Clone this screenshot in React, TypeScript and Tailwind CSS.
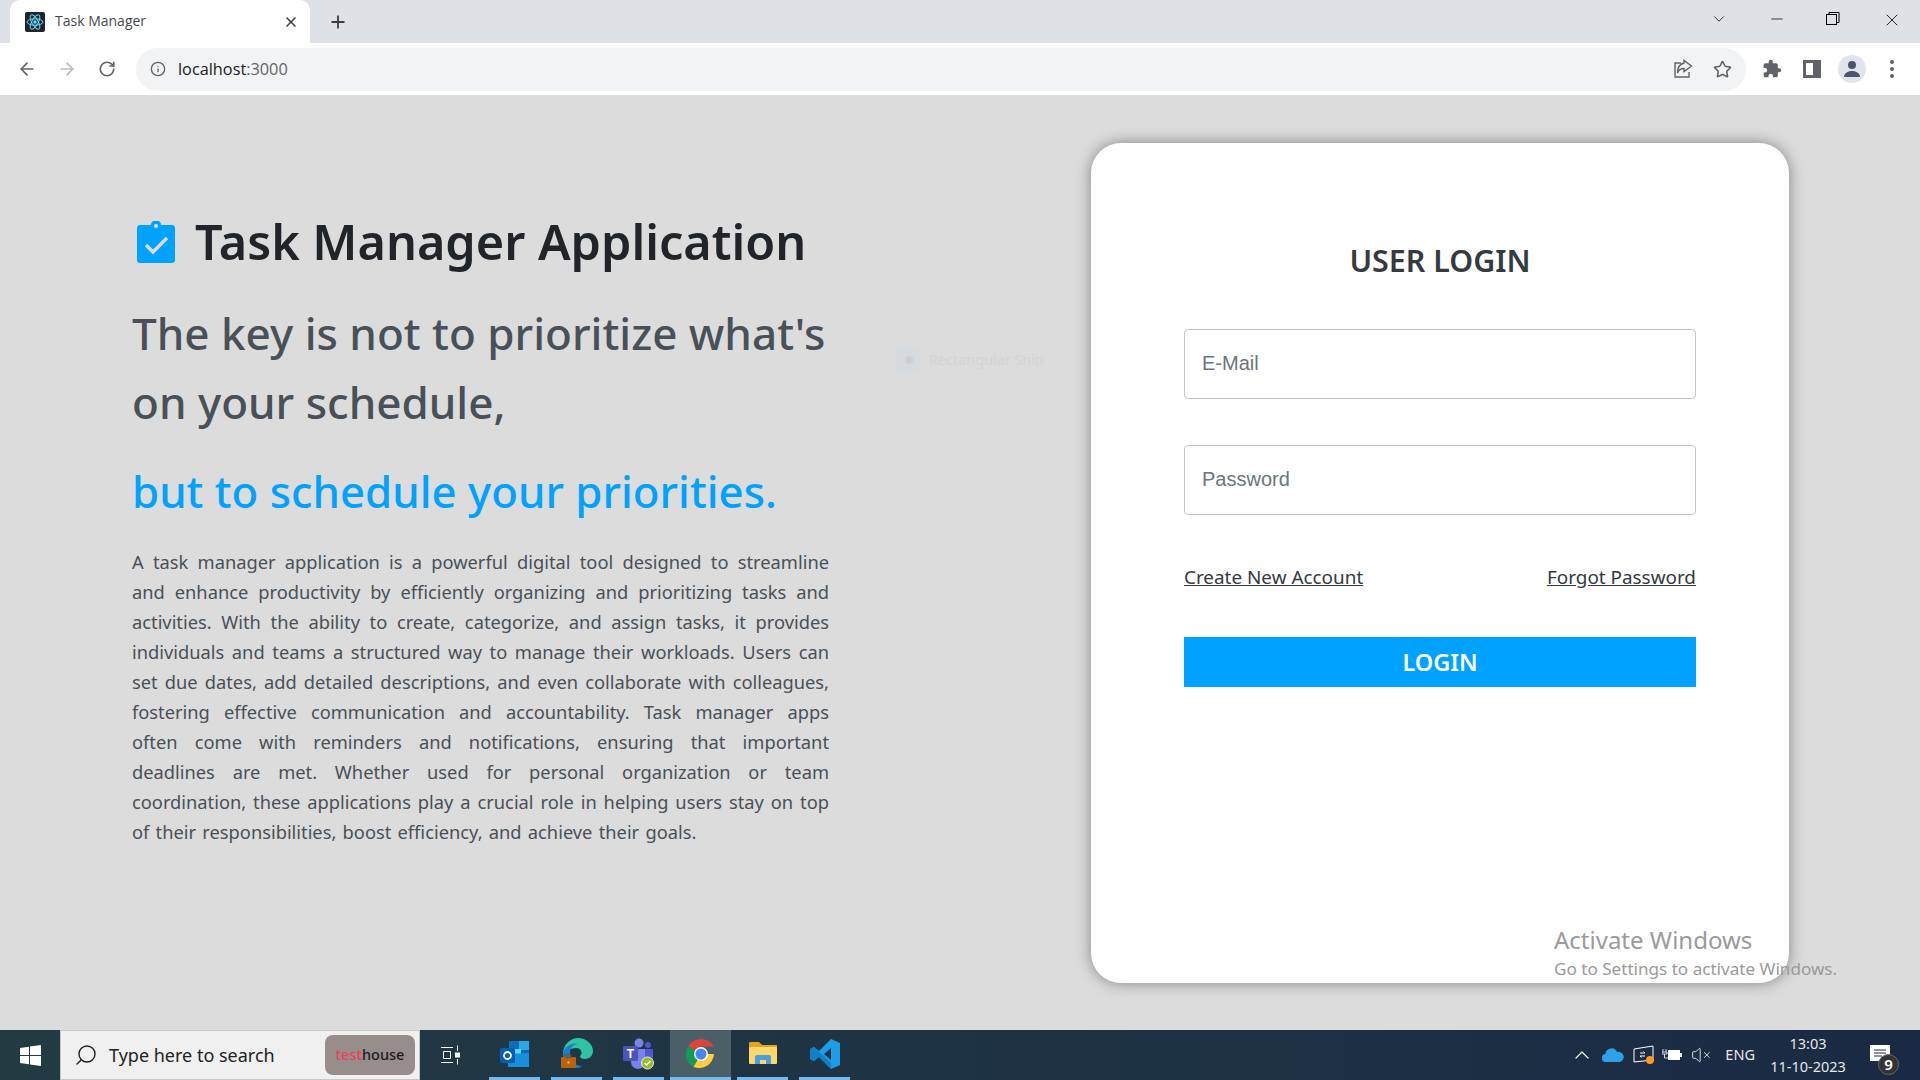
import { ArrowLeft, ArrowRight, ChevronDown, ChevronUp, Info, Minus, Plus, RotateCw, Search, Star, VolumeX, X } from 'lucide-react';

const font = { fontFamily: '"Noto Sans", "Open Sans", sans-serif' };

const paragraphLines = [
  'A task manager application is a powerful digital tool designed to streamline',
  'and enhance productivity by efficiently organizing and prioritizing tasks and',
  'activities. With the ability to create, categorize, and assign tasks, it provides',
  'individuals and teams a structured way to manage their workloads. Users can',
  'set due dates, add detailed descriptions, and even collaborate with colleagues,',
  'fostering effective communication and accountability. Task manager apps',
  'often come with reminders and notifications, ensuring that important',
  'deadlines are met. Whether used for personal organization or team',
  'coordination, these applications play a crucial role in helping users stay on top',
];

function ReactIcon() {
  return (
    <svg width="20" height="20" viewBox="0 0 20 20" className="shrink-0">
      <rect width="20" height="20" rx="2" fill="#20232a" />
      <circle cx="10" cy="10" r="1.8" fill="#61dafb" />
      <g fill="none" stroke="#61dafb" strokeWidth="1">
        <ellipse cx="10" cy="10" rx="8" ry="3.2" />
        <ellipse cx="10" cy="10" rx="8" ry="3.2" transform="rotate(60 10 10)" />
        <ellipse cx="10" cy="10" rx="8" ry="3.2" transform="rotate(120 10 10)" />
      </g>
    </svg>
  );
}

function TabBar() {
  return (
    <div className="flex h-[43px] items-end bg-[#dee1e6] pl-[10px]">
      <div className="flex h-[43px] w-[300px] items-center rounded-t-[10px] bg-white pl-[15px] pr-[11px]">
        <ReactIcon />
        <span className="ml-[10px] flex-1 pb-[2px] text-[14px] text-[#45494e]" style={{ fontFamily: '"Open Sans", sans-serif' }}>Task Manager</span>
        <X size={16} strokeWidth={2.4} color="#3c4043" />
      </div>
      <div className="ml-[18px] flex h-[43px] items-center">
        <Plus size={20} strokeWidth={2.2} color="#3c4043" />
      </div>
      <div className="ml-auto flex h-[43px] items-start pt-[10px] text-black">
        <ChevronDown size={18} strokeWidth={1} className="mr-[40px]" />
        <Minus size={18} strokeWidth={1} className="mr-[40px]" />
        <svg width="14" height="14" viewBox="0 0 14 14" fill="none" stroke="black" className="mr-[42px] mt-[2px]">
          <rect x="0.5" y="2.5" width="10" height="10" />
          <path d="M3 2.5V0.5H13V10.5H10.5" />
        </svg>
        <X size={20} strokeWidth={1} className="mr-[18px]" />
      </div>
    </div>
  );
}

function Toolbar() {
  return (
    <div className="flex h-[52px] items-center bg-white shadow-[0_1px_0_#e4e4e4]">
      <div className="ml-[17px] flex w-[119px] items-center">
        <ArrowLeft size={20} color="#5f6368" className="mr-[20px]" />
        <ArrowRight size={20} color="#b9bbbe" className="mr-[21px]" />
        <RotateCw size={18} color="#5f6368" strokeWidth={2.2} />
      </div>
      <div className="flex h-[43px] w-[1610px] items-center rounded-full bg-[#f1f3f4] pl-[14px] pr-[14px]">
        <Info size={16} color="#5f6368" />
        <span className="ml-[12px] flex-1 text-[16.300px] text-[#202124]" style={{ fontFamily: '"Open Sans", sans-serif' }}>
          localhost<span className="text-[#5f6368]">:3000</span>
        </span>
        <svg width="20" height="20" viewBox="0 0 20 20" fill="none" stroke="#5f6368" strokeWidth="1.4" className="mr-[20px]">
          <path d="M8 4H2V18H16V13" />
          <path d="M11 4V1.5L18.5 7L11 12.5V9.5C7.5 9.5 5.5 11 4.5 14C4.5 8.5 7 5 11 4Z" />
        </svg>
        <Star size={19} color="#5f6368" strokeWidth={2} />
      </div>
      <div className="ml-[16px] flex items-center text-[#5f6368]">
        <svg width="20" height="20" viewBox="0 0 24 24" fill="#5f6368">
          <path d="M20.5 11H19V7a2 2 0 0 0-2-2h-4V3.5a2.5 2.5 0 0 0-5 0V5H4a2 2 0 0 0-2 2v3.800h1.500a2.700 2.700 0 0 1 0 5.400H2V20a2 2 0 0 0 2 2h3.800v-1.500a2.700 2.700 0 0 1 5.400 0V22H17a2 2 0 0 0 2-2v-4h1.500a2.500 2.500 0 0 0 0-5z" />
        </svg>
        <div className="ml-[21px] h-[18px] w-[18px] border-[3px] border-r-[8px] border-[#5f6368] bg-white" />
        <div className="ml-[17px] flex h-[28px] w-[28px] items-center justify-center rounded-full bg-[#e1e4ea]">
          <svg width="18" height="18" viewBox="0 0 18 18" fill="#48566f">
            <circle cx="9" cy="5" r="4" />
            <path d="M1 17c0-3.500 3.500-6 8-6s8 2.500 8 6z" />
          </svg>
        </div>
        <div className="ml-[24px] flex flex-col gap-[3px]">
          <div className="h-[4px] w-[4px] rounded-full bg-[#5f6368]" />
          <div className="h-[4px] w-[4px] rounded-full bg-[#5f6368]" />
          <div className="h-[4px] w-[4px] rounded-full bg-[#5f6368]" />
        </div>
      </div>
    </div>
  );
}

function ClipboardIcon() {
  return (
    <svg width="38" height="42" viewBox="0 0 38 42" className="shrink-0">
      <path d="M3 4h11a5 5 0 0 1 10 0h11a3 3 0 0 1 3 3v32a3 3 0 0 1-3 3H3a3 3 0 0 1-3-3V7a3 3 0 0 1 3-3z" fill="#00a2ff" />
      <circle cx="19" cy="5" r="2" fill="#dcdcdc" />
      <path d="M9 24l7 7L30 17" fill="none" stroke="#dcdcdc" strokeWidth="3.500" />
    </svg>
  );
}

function LeftColumn() {
  return (
    <div className="w-[697px] pt-[116px]" style={font}>
      <div className="flex h-[62px] items-center">
        <div className="ml-[5px]"><ClipboardIcon /></div>
        <h1 className="ml-[20px] whitespace-nowrap pb-[2px] text-[48.600px] font-semibold leading-[60px] text-[#212529]">Task Manager Application</h1>
      </div>
      <h2 className="mt-[26px] whitespace-nowrap text-[44px] font-medium leading-[68.800px] text-[#495057]">
        The key is not to prioritize what's
        <br />
        on your schedule,
      </h2>
      <h2 className="mt-[20px] whitespace-nowrap text-[43.800px] font-medium leading-[68.800px] text-[#00a2ff]">but to schedule your priorities.</h2>
      <div className="mt-[22px] text-[18.300px] leading-[30px] text-[#495057]">
        {paragraphLines.map((line) => (
          <div key={line} className="text-justify [text-align-last:justify]">{line}</div>
        ))}
        <div className="[word-spacing:1.500px]">of their responsibilities, boost efficiency, and achieve their goals.</div>
      </div>
    </div>
  );
}

function LoginCard() {
  return (
    <div className="flex h-[840px] w-[698px] flex-col rounded-[30px] bg-white px-[93px] pt-[94px] shadow-[0_0_15px_rgba(0,0,0,0.4)]" style={font}>
      <h2 className="text-center text-[30.400px] font-semibold leading-[48px] text-[#343a40]">USER LOGIN</h2>
      <input placeholder="E-Mail" className="mt-[44px] h-[70px] rounded-[4px] border border-[#c4c4c4] px-[17px] pb-[2px] text-[20px] outline-none placeholder:text-[#6c757d]" style={{ fontFamily: '"Liberation Sans", sans-serif' }} />
      <input placeholder="Password" className="mt-[46px] h-[70px] rounded-[4px] border border-[#c4c4c4] px-[17px] pb-[2px] text-[20px] outline-none placeholder:text-[#6c757d]" style={{ fontFamily: '"Liberation Sans", sans-serif' }} />
      <div className="mt-[47px] flex justify-between text-[18.900px] leading-[30px] text-[#343a40] underline">
        <span>Create New Account</span>
        <span>Forgot Password</span>
      </div>
      <button className="mt-[45px] h-[50px] bg-[#00a2ff] pt-[1px] text-[23.500px] font-semibold text-white">LOGIN</button>
    </div>
  );
}

function OutlookIcon() {
  return (
    <svg width="30" height="28" viewBox="0 0 30 28">
      <rect x="9" y="1" width="20" height="26" rx="1" fill="#0f6cbd" />
      <rect x="19" y="1" width="10" height="9" fill="#28a8ea" />
      <rect x="14" y="9" width="7" height="8" fill="#50d9ff" />
      <path d="M7 14l22-1v14H9a1 1 0 0 1-1-1z" fill="#1490df" />
      <rect x="0" y="8" width="15" height="15" rx="1.500" fill="#0a5cb3" />
      <circle cx="7.500" cy="15.500" r="3.500" fill="none" stroke="white" strokeWidth="1.800" />
    </svg>
  );
}

function EdgeIcon() {
  return (
    <svg width="32" height="32" viewBox="0 0 32 32">
      <path d="M2 16C2 6 10 0 17 0c8 0 15 6 15 13 0 5-4 8-8 8-3 0-5-1-5-3 3-2 2-8-4-8C9 10 4 14 2 16z" fill="#2fc3a5" />
      <path d="M2 16C3 8 12 4 17 6c-5 0-8 4-8 10 0 6 5 12 12 12-2 2-4 2-6 2C8 30 2 24 2 16z" fill="#1a7fc9" />
      <rect x="0" y="19" width="15" height="11" rx="1" fill="#b8640f" />
      <rect x="5" y="16.500" width="5" height="3" fill="none" stroke="#8a4a0a" />
      <rect x="6.500" y="23.500" width="2" height="2" fill="#f5c04d" />
    </svg>
  );
}

function TeamsIcon() {
  return (
    <svg width="32" height="32" viewBox="0 0 32 32">
      <circle cx="16" cy="5" r="4.500" fill="#7b83eb" />
      <circle cx="25" cy="7" r="3" fill="#5059c9" />
      <path d="M18 11h11a1 1 0 0 1 1 1v8a5 5 0 0 1-5 5h-7z" fill="#5059c9" />
      <path d="M8 11h14v13a5 5 0 0 1-14 0z" fill="#7b83eb" />
      <rect x="0" y="8" width="15" height="15" rx="1.500" fill="#4b53bc" />
      <text x="7.500" y="20" textAnchor="middle" fontSize="12" fontWeight="700" fill="white" fontFamily="Liberation Sans, sans-serif">T</text>
      <circle cx="24.500" cy="25" r="6" fill="#92c01f" stroke="#e8e8e8" />
      <path d="M21.500 25l2 2 4-4" fill="none" stroke="white" strokeWidth="1.500" />
    </svg>
  );
}

function ChromeIcon() {
  return (
    <svg width="30" height="30" viewBox="0 0 30 30">
      <path d="M15 15L2.010 7.500A15 15 0 0 1 27.990 7.500H15z" fill="#db4437" />
      <path d="M15 15l-7.500 13A15 15 0 0 1 2.010 7.500z" fill="#0f9d58" />
      <path d="M15 15h12.990A15 15 0 0 1 7.500 27.990z" fill="#ffcd40" />
      <circle cx="15" cy="15" r="7" fill="white" />
      <circle cx="15" cy="15" r="5.500" fill="#4285f4" />
    </svg>
  );
}

function ExplorerIcon() {
  return (
    <svg width="28" height="24" viewBox="0 0 28 24">
      <path d="M0 1a1 1 0 0 1 1-1h9l3 3h-13z" fill="#e0a526" />
      <rect x="0" y="3" width="28" height="4" fill="#e0a526" />
      <rect x="0" y="5" width="28" height="17" rx="1" fill="#ffd869" />
      <path d="M6 22V15a2 2 0 0 1 2-2h12a2 2 0 0 1 2 2v7h-5v-4h-6v4z" fill="#4a9fe0" />
    </svg>
  );
}

function VscodeIcon() {
  return (
    <svg width="30" height="30" viewBox="0 0 30 30">
      <path d="M21 0l9 4v22l-9 4-12-12-5 4-4-2v-10l4-2 5 4zM21 9l-7 6 7 6z" fill="#1f9ce8" fillRule="evenodd" />
      <path d="M0 10l4-2 17 16v6L9 18l-5 4-4-2z" fill="#0a75b8" opacity="0.7" />
    </svg>
  );
}

function TaskItem({ active, children }: { active?: boolean; children: React.ReactNode }) {
  return (
    <div className={`flex h-[50px] flex-col ${active ? 'w-[61px] bg-[#4b5f68]' : 'w-[51px]'}`}>
      <div className="flex flex-1 items-center justify-center">{children}</div>
      <div className="h-[3px] bg-[#76b9ed]" />
    </div>
  );
}

function Taskbar() {
  return (
    <div className="flex h-[50px] items-center bg-gradient-to-r from-[#223b43] to-[#1a2a44] text-white">
      <div className="flex h-[50px] w-[60px] items-center justify-center">
        <svg width="21" height="21" viewBox="0 0 21 21" fill="white">
          <path d="M0 3l9-1.300V10H0zM10 1.500L21 0v10H10zM0 11h9v8.300L0 18zM10 11h11v10l-11-1.500z" />
        </svg>
      </div>
      <div className="flex h-[50px] w-[360px] items-center border border-[#c8c8c8] bg-[#f0f0f0] pl-[13px] pr-[4px] text-[#222]">
        <Search size={24} strokeWidth={1.400} className="-scale-x-100" />
        <span className="ml-[11px] flex-1 text-[18px]" style={font}>Type here to search</span>
        <div className="flex h-[40px] w-[90px] items-center justify-center rounded-[8px] bg-[#978d8a] text-[14.500px] font-medium text-[#1c1c1c]" style={font}>
          <span className="text-[#e8425c]">test</span>house
        </div>
      </div>
      <div className="ml-[20px] mr-[29px]">
        <svg width="20" height="20" viewBox="0 0 20 20" fill="none" stroke="white">
          <path d="M1 2.500H13M3.500 6.500H10.500V13.500H3.500zM1 17.500H13M17.500 0.500V6M17.500 14V19.500" />
          <rect x="15.500" y="8" width="4" height="4" fill="white" />
        </svg>
      </div>
      <TaskItem><OutlookIcon /></TaskItem>
      <div className="w-[11px]" />
      <TaskItem><EdgeIcon /></TaskItem>
      <div className="w-[11px]" />
      <TaskItem><TeamsIcon /></TaskItem>
      <div className="w-[6px]" />
      <TaskItem active><ChromeIcon /></TaskItem>
      <div className="w-[6px]" />
      <TaskItem><ExplorerIcon /></TaskItem>
      <div className="w-[11px]" />
      <TaskItem><VscodeIcon /></TaskItem>
      <div className="ml-auto flex items-center" style={font}>
        <ChevronUp size={24} strokeWidth={1.200} />
        <svg width="22" height="14" viewBox="0 0 22 14" className="ml-[8px]">
          <path d="M4 14a4 4 0 0 1-.500-8A6 6 0 0 1 15 4a4.500 4.500 0 0 1 3 10z" fill="#2f9fe8" />
        </svg>
        <svg width="22" height="20" viewBox="0 0 22 20" fill="none" stroke="white" className="ml-[9px]">
          <path d="M1 4L20 1V15L1 17z" />
          <circle cx="17" cy="15" r="4" fill="#ff9a1f" stroke="none" />
          <path d="M7 8h5l-1.500-1.500M12 11H7l1.500 1.500" />
        </svg>
        <svg width="20" height="14" viewBox="0 0 20 14" fill="white" className="ml-[7px]">
          <path d="M1 1v3M4 1v3M0 4h5v2H0zM2.500 6v4H6" stroke="white" strokeWidth="0.800" fill="none" />
          <rect x="6" y="2" width="12" height="10" />
          <rect x="18" y="5" width="2" height="4" />
        </svg>
        <VolumeX size={20} strokeWidth={1} className="ml-[9px]" />
        <span className="ml-[14px] text-[14.500px] text-[#e8e8e8]">ENG</span>
        <div className="ml-[13px] flex w-[80px] flex-col items-center text-[14.500px] leading-[23px] text-[#e8e8e8]">
          <span>13:03</span>
          <span>11-10-2023</span>
        </div>
        <div className="relative ml-[22px] mr-[30px] h-[30px] w-[20px]">
          <svg width="20" height="18" viewBox="0 0 20 18" fill="white" className="mt-[5px]">
            <path d="M0 0h20v16H0z" />
            <path d="M4 5h12M4 8h12M4 11h8" stroke="#1a2a44" strokeWidth="1" />
          </svg>
          <div className="absolute left-[8px] top-[14px] flex h-[21px] w-[21px] items-center justify-center rounded-full border border-[#666] bg-[#333] text-[15px] font-semibold">9</div>
        </div>
      </div>
    </div>
  );
}

export default function App() {
  return (
    <div className="relative flex h-[1080px] w-[1920px] flex-col overflow-hidden bg-[#dcdcdc]">
      <TabBar />
      <Toolbar />
      <main className="flex h-[935px] bg-[#dcdcdc] pl-[132px]">
        <LeftColumn />
        <div className="ml-[262px] mt-[48px]"><LoginCard /></div>
      </main>
      <Taskbar />
      <div className="absolute left-[897px] top-[349px] flex h-[22px] items-center text-[14.400px] text-[#d3d4d6]" style={font}>
        <div className="mr-[8px] flex h-[24px] w-[24px] items-center justify-center bg-[#d6dbdf]">
          <div className="h-[8px] w-[8px] rounded-full bg-[#cccfd2]" />
        </div>
        Rectangular Snip
      </div>
      <div className="pointer-events-none absolute left-[1554px] top-[923px] text-[#9a9a9a]" style={font}>
        <div className="text-[24px] leading-[34px]">Activate Windows</div>
        <div className="text-[17.100px] leading-[24px]">Go to Settings to activate Windows.</div>
      </div>
    </div>
  );
}
